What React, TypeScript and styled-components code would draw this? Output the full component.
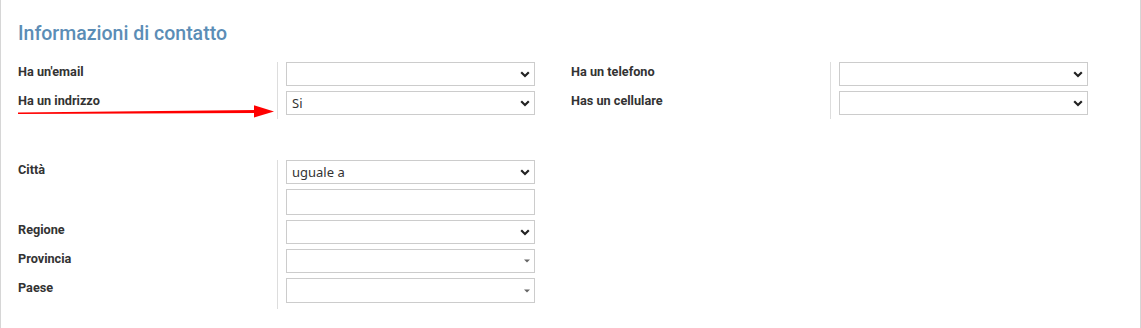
import styled, { createGlobalStyle } from 'styled-components';

const GlobalStyle = createGlobalStyle`
  html, body {
    margin: 0;
    padding: 0;
    background: #ffffff;
  }
`;

const Chevron = () => (
  <svg width="10" height="7" viewBox="0 0 10 7">
    <path d="M1.2 1.3 L5 5 L8.8 1.3" fill="none" stroke="#222" strokeWidth="2.2" />
  </svg>
);

const Caret = () => (
  <svg width="6" height="4" viewBox="0 0 6 4">
    <path d="M0 0.5 H6 L3 3.5 Z" fill="#666" />
  </svg>
);

const ContactInfo = () => {
  return (
    <Panel>
      <GlobalStyle />
      <Title>Informazioni di contatto</Title>
      <TopSection>
        <Group>
          <LabelCol>
            <Label>Ha un'email</Label>
            <Label>Ha un indrizzo</Label>
          </LabelCol>
          <FieldCol>
            <Select>
              <Chevron />
            </Select>
            <Select>
              <Value>Si</Value>
              <Chevron />
            </Select>
          </FieldCol>
        </Group>
        <Group>
          <LabelCol>
            <Label>Ha un telefono</Label>
            <Label>Has un cellulare</Label>
          </LabelCol>
          <FieldCol>
            <Select>
              <Chevron />
            </Select>
            <Select>
              <Chevron />
            </Select>
          </FieldCol>
        </Group>
        <Arrow width="260" height="14" viewBox="0 0 260 14">
          <path d="M0 7.4 L240 5 L240 8 L0 9 Z" fill="#ff0000" />
          <path d="M236 0.3 L256 6.4 L236 12.5 Z" fill="#ff0000" />
        </Arrow>
      </TopSection>

      <BottomSection>
        <Group>
          <LabelCol>
            <Label $height={55}>Città</Label>
            <Label>Regione</Label>
            <Label>Provincia</Label>
            <Label>Paese</Label>
          </LabelCol>
          <FieldCol $bottom={6}>
            <Select>
              <Value>uguale a</Value>
              <Chevron />
            </Select>
            <TextInput />
            <Select>
              <Chevron />
            </Select>
            <Select>
              <Caret />
            </Select>
            <Select $height={25}>
              <Caret />
            </Select>
          </FieldCol>
        </Group>
      </BottomSection>
    </Panel>
  );
};

export default ContactInfo;

const Panel = styled.div`
  box-sizing: border-box;
  width: 1141px;
  height: 328px;
  padding: 22px 17px 0;
  border-left: 1px solid #d6d6d6;
  border-right: 1px solid #d6d6d6;
  background: #ffffff;
  font-family: Roboto, 'Liberation Sans', sans-serif;
`;

const Title = styled.div`
  font-size: 19.5px;
  font-weight: 500;
  line-height: 24px;
  color: #5b8db6;
  margin-bottom: 16px;
`;

const TopSection = styled.div`
  position: relative;
  display: flex;
  gap: 36px;
`;

const BottomSection = styled.div`
  display: flex;
  margin-top: 41px;
`;

const Group = styled.div`
  display: flex;
`;

const LabelCol = styled.div`
  width: 259px;
  display: flex;
  flex-direction: column;
  gap: 5px;
`;

const Label = styled.div<{ $height?: number }>`
  box-sizing: border-box;
  height: ${(p) => p.$height ?? 24}px;
  padding-top: 1px;
  font-size: 12.7px;
  font-weight: 700;
  line-height: 18px;
  color: #333333;
`;

const FieldCol = styled.div<{ $bottom?: number }>`
  display: flex;
  flex-direction: column;
  gap: 5px;
  padding: 0 0 ${(p) => p.$bottom ?? 4}px 8px;
  border-left: 1px solid #dddddd;
`;

const Select = styled.div<{ $height?: number }>`
  box-sizing: border-box;
  width: 249px;
  height: ${(p) => p.$height ?? 24}px;
  padding: 0 4px 0 5px;
  border: 1px solid #cccccc;
  background: #ffffff;
  display: flex;
  align-items: center;
  justify-content: flex-end;
`;

const Value = styled.span`
  margin-right: auto;
  font-family: 'Noto Sans', 'Open Sans', sans-serif;
  font-size: 13px;
  color: #333333;
`;

const TextInput = styled.div`
  box-sizing: border-box;
  width: 249px;
  height: 26px;
  border: 1px solid #cccccc;
  background: #ffffff;
`;

const Arrow = styled.svg`
  position: absolute;
  left: 0;
  top: 43px;
`;
